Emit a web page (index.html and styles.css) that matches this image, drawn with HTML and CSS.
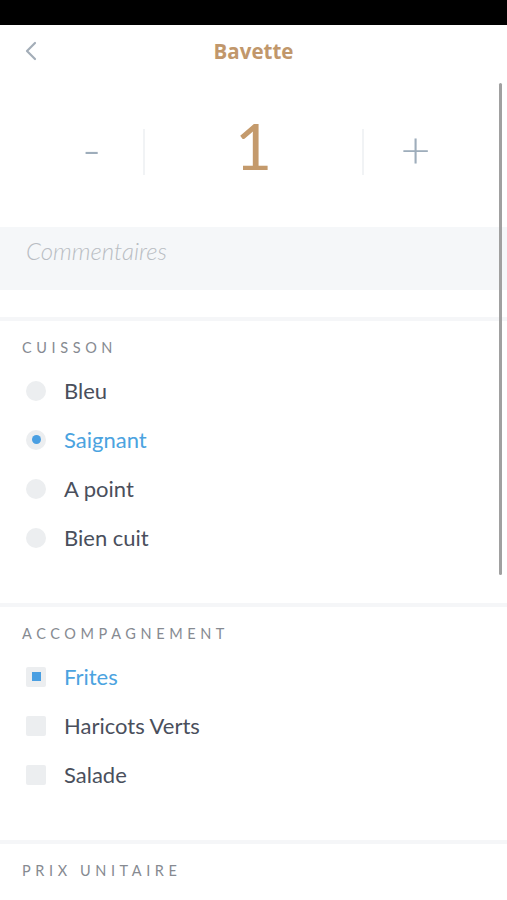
FILE: index.html
```html
<!DOCTYPE html>
<html lang="fr">
<head>
  <meta charset="UTF-8" />
  <meta name="viewport" content="width=device-width, initial-scale=1.0"/>
  <title>Bavette</title>
  <link rel="stylesheet" href="styles.css">
</head>
<body>

  <div class="statusbar"></div>

  <div class="navbar">
    <a class="back" href="#">
      <svg width="14" height="20" viewBox="0 0 14 20"><path d="M11 2 L3 10 L11 18" fill="none" stroke="#a3adb8" stroke-width="2.2" stroke-linecap="round" stroke-linejoin="round"/></svg>
    </a>
    <h1>Bavette</h1>
  </div>

  <div class="scrollbar"></div>

  <div class="quantity">
    <button class="qty-btn minus">-</button>
    <div class="qty-value">1</div>
    <button class="qty-btn plus">+</button>
  </div>

  <div class="comment">
    <input type="text" placeholder="Commentaires" />
  </div>

  <div class="section">
    <div class="section-title">Cuisson</div>
    <div class="option">
      <span class="radio"></span><span class="label">Bleu</span>
    </div>
    <div class="option selected">
      <span class="radio"></span><span class="label">Saignant</span>
    </div>
    <div class="option">
      <span class="radio"></span><span class="label">A point</span>
    </div>
    <div class="option">
      <span class="radio"></span><span class="label">Bien cuit</span>
    </div>
  </div>

  <div class="section">
    <div class="section-title">Accompagnement</div>
    <div class="option selected">
      <span class="check"></span><span class="label">Frites</span>
    </div>
    <div class="option">
      <span class="check"></span><span class="label">Haricots Verts</span>
    </div>
    <div class="option">
      <span class="check"></span><span class="label">Salade</span>
    </div>
  </div>

  <div class="section">
    <div class="section-title">Prix unitaire</div>
  </div>

</body>
</html>
```

FILE: styles.css
```css
body {
  margin: 0;
  font-family: 'Lato', sans-serif;
  background: #ffffff;
  color: #4a4f5c;
}
.statusbar {
  height: 25px;
  background: #000;
}
.navbar {
  height: 52px;
  display: flex;
  align-items: center;
  justify-content: center;
  position: relative;
}
.back {
  position: absolute;
  left: 24px;
  top: 16px;
  display: block;
}
.navbar h1 {
  margin: 0;
  font-family: 'Open Sans', sans-serif;
  font-size: 20.5px;
  font-weight: 700;
  color: #c1976b;
}
.scrollbar {
  position: absolute;
  right: 5px;
  top: 83px;
  width: 3px;
  height: 492px;
  background: #a0a0a0;
  border-radius: 2px;
}
.quantity {
  display: grid;
  grid-template-columns: 103px 1fr 103px;
  align-items: center;
  padding: 0 40px;
  height: 150px;
}
.qty-btn {
  background: none;
  border: none;
  font-family: 'Lato', sans-serif;
  font-weight: 300;
  font-size: 52px;
  line-height: 46px;
  color: #9eadbb;
  padding: 0 0 8px;
}
.qty-value {
  border-left: 2px solid #f1f3f5;
  border-right: 2px solid #f1f3f5;
  height: 46px;
  line-height: 34px;
  text-align: center;
  font-size: 64px;
  font-weight: 400;
  color: #c49a6c;
}
.comment {
  background: #f5f7f9;
  height: 63px;
  margin-bottom: 27px;
}
.comment input {
  width: 100%;
  box-sizing: border-box;
  background: transparent;
  border: none;
  padding: 9px 26px;
  font-family: 'Lato', sans-serif;
  font-style: italic;
  font-weight: 300;
  font-size: 24px;
  outline: none;
}
.comment input::placeholder {
  color: #b9bdc3;
}
.section {
  border-top: 4px solid #f5f6f8;
  padding: 18px 0 41px 22px;
}
.section-title {
  text-transform: uppercase;
  letter-spacing: 4.6px;
  font-size: 14.5px;
  font-weight: 400;
  color: #868a91;
  margin-bottom: 10px;
}
.option {
  display: flex;
  align-items: center;
  height: 49px;
}
.label {
  font-size: 22px;
  margin-left: 18px;
}
.radio,
.check {
  width: 20px;
  height: 20px;
  background: #eceef0;
  margin-left: 4px;
  display: flex;
  align-items: center;
  justify-content: center;
}
.radio {
  border-radius: 50%;
}
.check {
  border-radius: 2px;
}
.selected .label {
  color: #4ba3e0;
}
.selected .radio::after {
  content: "";
  width: 9px;
  height: 9px;
  border-radius: 50%;
  background: #4a9fe2;
}
.selected .check::after {
  content: "";
  width: 9px;
  height: 9px;
  background: #4a9fe2;
}
```
